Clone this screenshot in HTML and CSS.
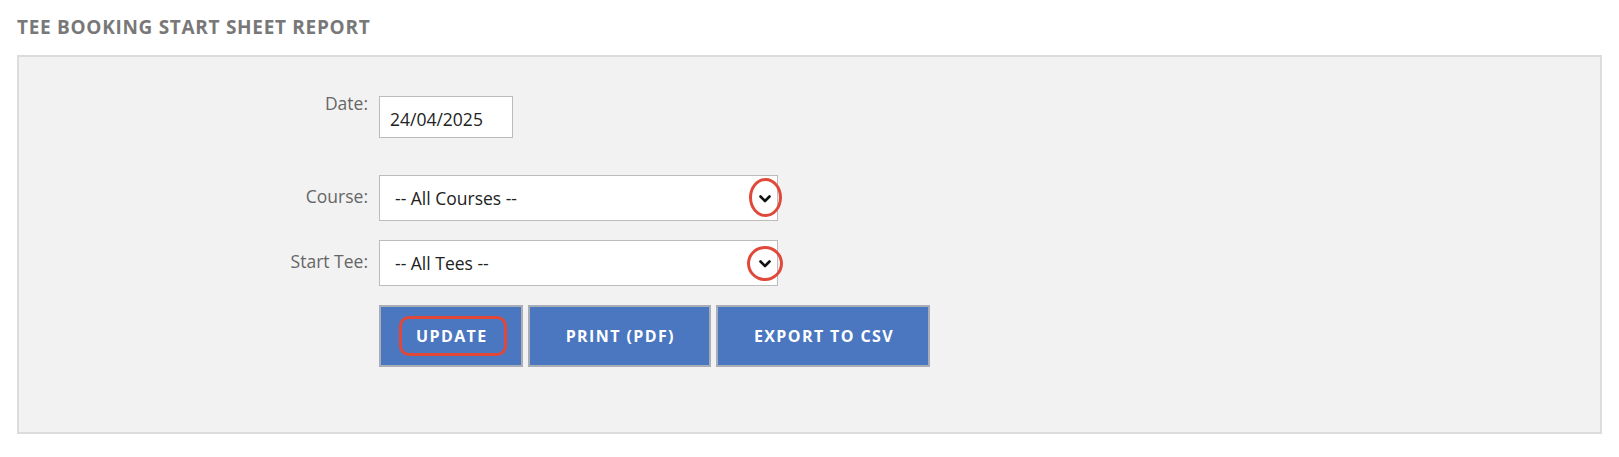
FILE: index.html
```html
<!DOCTYPE html>
<html lang="en">
<head>
<meta charset="utf-8">
<title>Tee Booking Start Sheet Report</title>
<link rel="stylesheet" href="styles.css">
</head>
<body>
  <h1 class="page-title">TEE BOOKING START SHEET REPORT</h1>
  <div class="panel">
    <div class="form">
      <div class="row row-date">
        <label class="label label-top">Date:</label>
        <div class="control">
          <div class="input-date">24/04/2025</div>
        </div>
      </div>
      <div class="row">
        <label class="label">Course:</label>
        <div class="control">
          <div class="select">
            <span class="select-text">-- All Courses --</span>
            <svg class="chev" width="12" height="8" viewBox="0 0 12 8"><polyline points="1.5,1.5 6,6 10.5,1.5" fill="none" stroke="#111" stroke-width="2.6" stroke-linecap="round" stroke-linejoin="round"/></svg>
            <span class="mark mark-1"></span>
          </div>
        </div>
      </div>
      <div class="row">
        <label class="label">Start Tee:</label>
        <div class="control">
          <div class="select">
            <span class="select-text">-- All Tees --</span>
            <svg class="chev" width="12" height="8" viewBox="0 0 12 8"><polyline points="1.5,1.5 6,6 10.5,1.5" fill="none" stroke="#111" stroke-width="2.6" stroke-linecap="round" stroke-linejoin="round"/></svg>
            <span class="mark mark-2"></span>
          </div>
        </div>
      </div>
      <div class="row">
        <span class="label"></span>
        <div class="control buttons">
          <button class="btn btn-update">UPDATE<span class="mark-rect"></span></button>
          <button class="btn">PRINT (PDF)</button>
          <button class="btn">EXPORT TO CSV</button>
        </div>
      </div>
    </div>
  </div>
</body>
</html>
```
FILE: styles.css
```css
* { box-sizing: border-box; }

body {
  margin: 0;
  padding: 0 17px;
  background: #ffffff;
  font-family: "Open Sans", "Liberation Sans", sans-serif;
  color: #333;
}

.page-title {
  margin: 14px 0 15px;
  font-size: 19px;
  line-height: 26px;
  font-weight: 700;
  color: #787878;
  letter-spacing: 0.7px;
}

.panel {
  background: #f2f2f2;
  border: 2px solid #dcdcdc;
  height: 379px;
  padding: 39px 0 0;
}

.form {
  display: flex;
  flex-direction: column;
  gap: 19px;
}

.row {
  display: flex;
  align-items: center;
}

.row-date {
  align-items: flex-start;
  margin-bottom: 18px;
}

.label {
  width: 349px;
  margin-right: 11px;
  text-align: right;
  font-size: 17.5px;
  line-height: 24px;
  color: #666666;
  position: relative;
  top: -2px;
}

.label-top {
  top: -5px;
}

.control {
  display: flex;
}

.input-date {
  width: 134px;
  height: 42px;
  background: #fff;
  border: 1px solid #bcbcbc;
  padding: 0 0 0 10px;
  font-size: 17.5px;
  line-height: 44px;
  color: #222;
}

.select {
  position: relative;
  width: 399px;
  height: 46px;
  background: #fff;
  border: 1px solid #bcbcbc;
  display: flex;
  align-items: center;
  padding: 0 0 0 15px;
}

.select-text {
  font-size: 17.5px;
  line-height: 24px;
  color: #222;
}

.chev {
  position: absolute;
  right: 6px;
  top: 19px;
}

.mark {
  position: absolute;
  border: 3px solid #e0483a;
  border-radius: 50%;
}

.mark-1 {
  left: 369px;
  top: 2px;
  width: 33px;
  height: 39px;
}

.mark-2 {
  left: 367px;
  top: 5px;
  width: 36px;
  height: 35px;
}

.buttons {
  gap: 5px;
}

.btn {
  position: relative;
  height: 62px;
  padding: 0 34px 0 36px;
  background: #4a77c0;
  border: 2px solid #a9aeb6;
  color: #ffffff;
  font-family: "Open Sans", "Liberation Sans", sans-serif;
  font-weight: 700;
  font-size: 16px;
  letter-spacing: 1.4px;
  line-height: 20px;
  cursor: pointer;
}

.btn-update {
  padding: 0 33px 0 35px;
}

.mark-rect {
  position: absolute;
  left: 18px;
  top: 9px;
  width: 108px;
  height: 40px;
  border: 3px solid #e0483a;
  border-radius: 10px;
}
```
